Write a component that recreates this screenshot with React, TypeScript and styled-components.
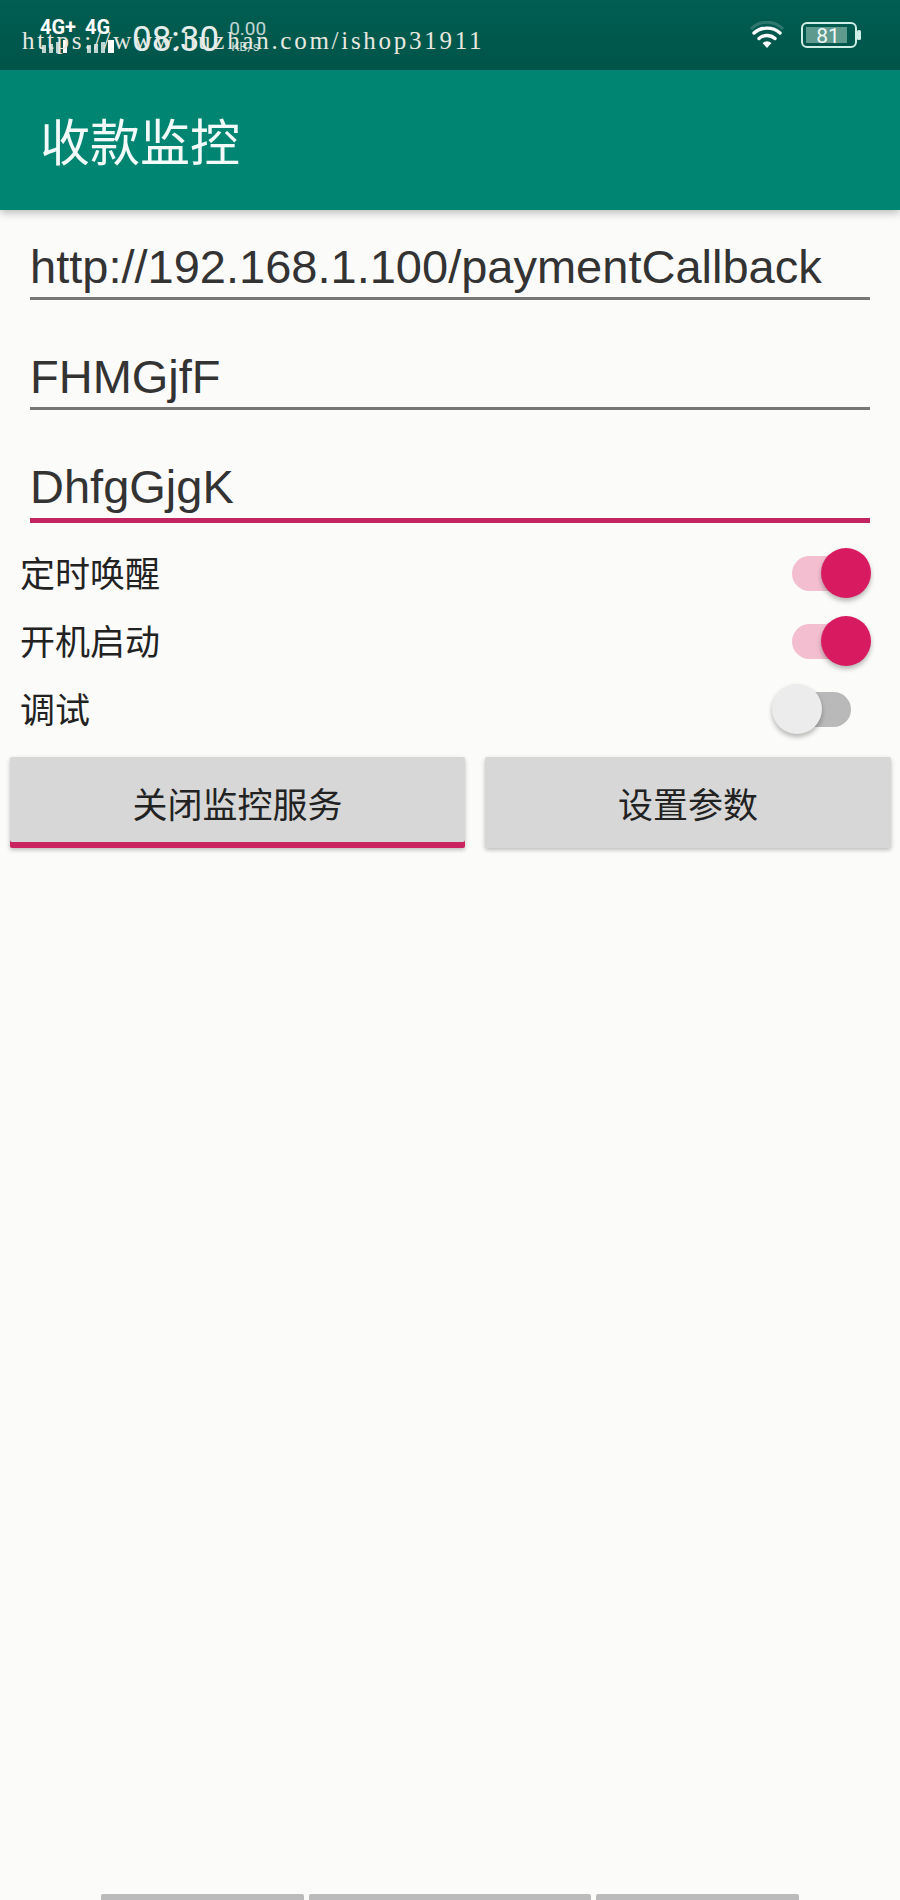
import { createGlobalStyle } from "styled-components";
import styled from "styled-components";

const GlobalStyle = createGlobalStyle`
  html, body {
    margin: 0;
    padding: 0;
    background: #fbfbf9;
  }
`;

const Page = styled.div`
  display: flex;
  flex-direction: column;
  width: 900px;
  height: 1900px;
  overflow: hidden;
  background: #fbfbf9;
  font-family: "Noto Sans CJK SC", "Noto Sans", sans-serif;
  color: #222;
`;

const StatusBar = styled.div`
  position: relative;
  display: flex;
  flex: none;
  height: 70px;
  padding: 0 39px 0 40px;
  box-sizing: border-box;
  align-items: center;
  justify-content: space-between;
  background: linear-gradient(#005e52, #005448);
  color: #fff;
  font-family: "Roboto", sans-serif;
`;

const StatusGroup = styled.div`
  display: flex;
  align-items: center;
`;

const Network = styled.div`
  display: flex;
  width: 92px;
`;

const NetworkItem = styled.div`
  display: flex;
  flex-direction: column;
  align-items: flex-start;
  gap: 4px;
  width: 45px;
  font-size: 20px;
  line-height: 18px;
  font-weight: 700;
`;

const Clock = styled.span`
  font-size: 35px;
  line-height: 40px;
  opacity: 0.9;
  margin-top: 10px;
  margin-right: 10px;
`;

const Speed = styled.div`
  display: flex;
  flex-direction: column;
  font-size: 19px;
  line-height: 21px;
  opacity: 0.75;
  margin-top: 2px;
`;

const SpeedUnit = styled.span`
  font-size: 13px;
  line-height: 15px;
  margin-left: 2px;
`;

const Watermark = styled.div`
  position: absolute;
  left: 22px;
  top: 27px;
  font-family: "Liberation Serif", serif;
  font-size: 25px;
  line-height: 28px;
  letter-spacing: 2.72px;
  color: #e8e8e0;
  white-space: nowrap;
`;

const Battery = styled.svg`
  margin-left: 17px;
`;

const AppBar = styled.div`
  display: flex;
  flex: none;
  height: 140px;
  padding: 0 0 2px 40px;
  box-sizing: border-box;
  align-items: center;
  background: #008573;
  color: #f2fbf8;
  font-size: 50px;
  box-shadow: 0 3px 8px rgba(0, 0, 0, 0.25);
`;

const Form = styled.div`
  display: flex;
  flex-direction: column;
  padding: 22px 30px 0;
`;

const Field = styled.div<{ $focused?: boolean }>`
  height: ${p => (p.$focused ? 71 : 68)}px;
  box-sizing: border-box;
  font-family: "Liberation Sans", sans-serif;
  font-size: 47px;
  line-height: 70px;
  color: #333;
  white-space: nowrap;
  border-bottom: ${p => (p.$focused ? "5px solid #c2255f" : "3px solid #777")};
  & + & {
    margin-top: 42px;
  }
`;

const Toggles = styled.div`
  display: flex;
  flex-direction: column;
  margin-top: 16px;
  padding: 0 29px 0 20px;
`;

const ToggleRow = styled.div`
  display: flex;
  align-items: center;
  justify-content: space-between;
  height: 68px;
  font-size: 35px;
  line-height: 46px;
  color: #222;
`;

const RowLabel = styled.span`
  margin-bottom: 2px;
`;

const Switch = styled.div<{ $on?: boolean }>`
  position: relative;
  width: 59px;
  height: 35px;
  margin-right: 20px;
  border-radius: 18px;
  background: ${p => (p.$on ? "#f3bfd0" : "#b9b9b9")};
`;

const Thumb = styled.div<{ $on?: boolean }>`
  position: absolute;
  top: -8px;
  ${p => (p.$on ? "right: -20px;" : "left: -20px;")}
  width: 50px;
  height: 50px;
  border-radius: 50%;
  background: ${p => (p.$on ? "#d81b60" : "#ececec")};
  box-shadow: 0 3px 5px rgba(0, 0, 0, 0.28);
`;

const Buttons = styled.div`
  display: flex;
  justify-content: space-between;
  margin-top: 14px;
  padding: 0 9px 0 10px;
`;

const Button = styled.div<{ $width: number; $active?: boolean }>`
  display: flex;
  width: ${p => p.$width}px;
  height: 91px;
  align-items: center;
  justify-content: center;
  background: #d6d7d6;
  border-radius: 2px;
  font-size: 35px;
  color: #222;
  box-shadow: ${p => (p.$active ? "inset 0 -6px 0 #c9245f, " : "")}0 2px 4px rgba(0, 0, 0, 0.25);
`;

const NavHint = styled.div`
  display: flex;
  gap: 5px;
  margin-top: auto;
  padding-left: 101px;
`;

const NavPiece = styled.div<{ $width: number }>`
  width: ${p => p.$width}px;
  height: 6px;
  background: #bbbbbb;
  border-radius: 2px 2px 0 0;
`;

function Wifi() {
  return (
    <svg width="34" height="28" viewBox="0 0 34 28">
      <path d="M1 8 C10 -1 24 -1 33 8" fill="none" stroke="#ffffff" strokeOpacity="0.18" strokeWidth="3" />
      <path d="M4 12 C11 5.5 23 5.5 30 12" fill="none" stroke="#ffffff" strokeWidth="3.4" strokeLinecap="round" />
      <path d="M9 17.5 C13.500 13.500 20.500 13.500 25 17.500" fill="none" stroke="#ffffff" strokeWidth="3.4" strokeLinecap="round" />
      <path d="M12.500 22 L17 27 L21.500 22 C18.500 19.800 15.500 19.800 12.500 22 Z" fill="#ffffff" />
    </svg>
  );
}

function SignalBars({ strong }: { strong?: boolean }) {
  return (
    <svg width="34" height="13" viewBox="0 0 34 13">
      <rect x="2" y="5" width="4" height="8" fill="#ffffff" fillOpacity="0.75" />
      <rect x="9" y="4" width="4" height="9" fill="#ffffff" fillOpacity="0.75" />
      <rect x="16" y="2" width="4" height="11" fill="#ffffff" fillOpacity="0.75" />
      <rect x="23" y="0" width={strong ? 6 : 4} height="13" fill="#ffffff" />
    </svg>
  );
}

export default function App() {
  return (
    <Page>
      <GlobalStyle />
      <StatusBar>
        <StatusGroup>
          <Network>
            <NetworkItem>
              4G+
              <SignalBars />
            </NetworkItem>
            <NetworkItem>
              4G
              <SignalBars strong />
            </NetworkItem>
          </Network>
          <Clock>08:30</Clock>
          <Speed>
            0.00
            <SpeedUnit>KB/s</SpeedUnit>
          </Speed>
        </StatusGroup>
        <StatusGroup>
          <Wifi />
          <Battery width="60" height="26" viewBox="0 0 60 26">
            <rect x="1" y="1" width="54" height="24" rx="5" fill="none" stroke="#cfeee6" strokeWidth="2" />
            <rect x="5" y="5" width="41" height="16" fill="#5e9a8e" />
            <rect x="56" y="8" width="4" height="10" rx="1.5" fill="#cfeee6" />
            <text x="27" y="20.500" fontSize="21" fontFamily="Roboto, sans-serif" textAnchor="middle" fill="#eef7f4">
              81
            </text>
          </Battery>
        </StatusGroup>
        <Watermark>https://www.huzhan.com/ishop31911</Watermark>
      </StatusBar>
      <AppBar>收款监控</AppBar>
      <Form>
        <Field>http://192.168.1.100/paymentCallback</Field>
        <Field>FHMGjfF</Field>
        <Field $focused>DhfgGjgK</Field>
      </Form>
      <Toggles>
        <ToggleRow>
          <RowLabel>定时唤醒</RowLabel>
          <Switch $on>
            <Thumb $on />
          </Switch>
        </ToggleRow>
        <ToggleRow>
          <RowLabel>开机启动</RowLabel>
          <Switch $on>
            <Thumb $on />
          </Switch>
        </ToggleRow>
        <ToggleRow>
          <RowLabel>调试</RowLabel>
          <Switch>
            <Thumb />
          </Switch>
        </ToggleRow>
      </Toggles>
      <Buttons>
        <Button $width={455} $active>
          关闭监控服务
        </Button>
        <Button $width={406}>设置参数</Button>
      </Buttons>
      <NavHint>
        <NavPiece $width={203} />
        <NavPiece $width={282} />
        <NavPiece $width={203} />
      </NavHint>
    </Page>
  );
}
